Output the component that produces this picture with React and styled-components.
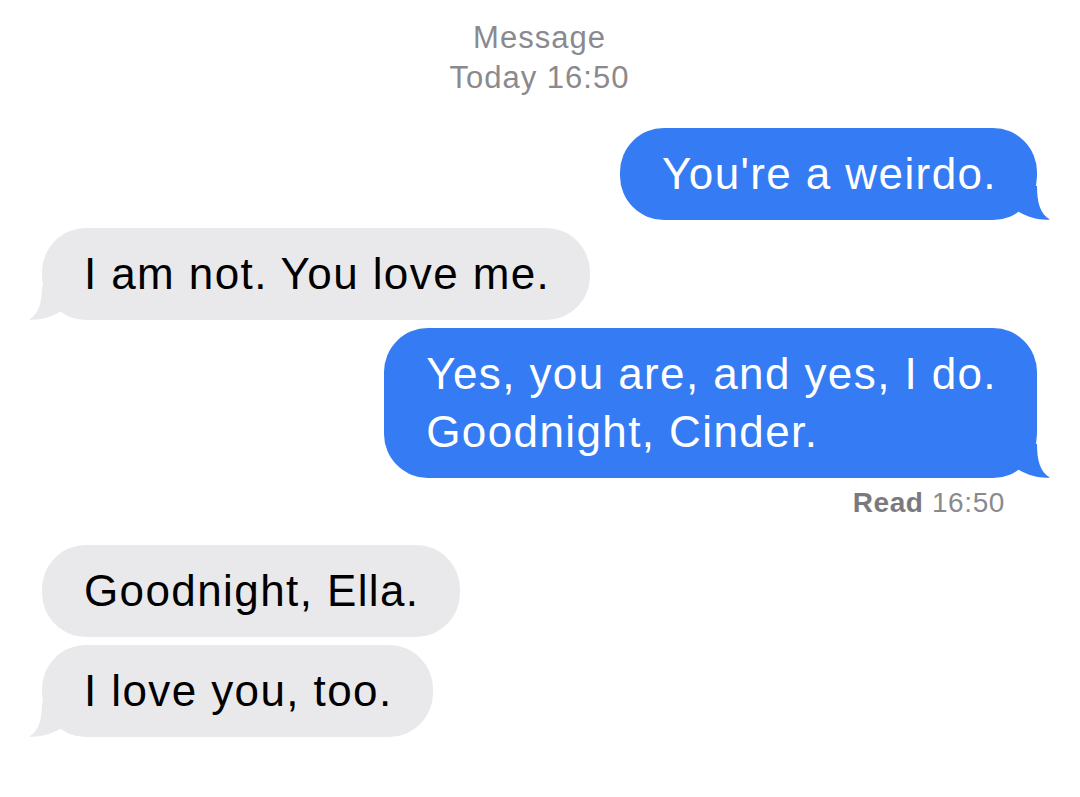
import React from "react";
import styled, { createGlobalStyle } from "styled-components";

const GlobalStyle = createGlobalStyle`
  html, body {
    margin: 0;
    padding: 0;
    background: #ffffff;
  }
  body {
    font-family: "Liberation Sans", Arial, sans-serif;
    -webkit-font-smoothing: antialiased;
  }
`;

const Thread = styled.div`
  display: flex;
  flex-direction: column;
  padding: 18px 43px 40px 42px;
  overflow: hidden;
`;

const Header = styled.div`
  display: flex;
  flex-direction: column;
  align-items: center;
  color: #8a8a8e;
  font-size: 31px;
  line-height: 40px;
  letter-spacing: 1px;
  margin-bottom: 22px;
`;

const Row = styled.div`
  display: flex;
  justify-content: ${(p) => (p.$mine ? "flex-end" : "flex-start")};
  margin-top: 8px;
`;

const Bubble = styled.div`
  position: relative;
  padding: 17px 40px 17px 42px;
  border-radius: 44px;
  font-size: 44px;
  line-height: 58px;
  letter-spacing: 1.4px;
  white-space: pre-line;
  background: ${(p) => (p.$mine ? "#357bf3" : "#e9e9eb")};
  color: ${(p) => (p.$mine ? "#ffffff" : "#000000")};
`;

const TailSvg = styled.svg`
  position: absolute;
  bottom: 0;
  width: 36px;
  height: 34px;
  ${(p) => (p.$mine ? "right: -13px;" : "left: -13px; transform: scaleX(-1);")}
`;

const Status = styled.div`
  align-self: flex-end;
  margin: 9px 32px 18px 0;
  font-size: 28px;
  line-height: 32px;
  letter-spacing: 0.6px;
  color: #8a8a8e;

  b {
    font-weight: 700;
    color: #7a7a7e;
  }
`;

const Tail = ({ mine }) => (
  <TailSvg $mine={mine} viewBox="0 0 36 34">
    <path
      d="M23 0 C23 16 26 28 36 33.5 C28 34.5 15 32 5 26 L0 22 L0 0 Z"
      fill={mine ? "#357bf3" : "#e9e9eb"}
    />
  </TailSvg>
);

const Message = ({ mine, tail, children }) => (
  <Row $mine={mine}>
    <Bubble $mine={mine}>
      {children}
      {tail && <Tail mine={mine} />}
    </Bubble>
  </Row>
);

export default function App() {
  return (
    <>
      <GlobalStyle />
      <Thread>
        <Header>
          <span>Message</span>
          <span>Today 16:50</span>
        </Header>
        <Message mine tail>
          You're a weirdo.
        </Message>
        <Message tail>I am not. You love me.</Message>
        <Message mine tail>
          {"Yes, you are, and yes, I do.\nGoodnight, Cinder."}
        </Message>
        <Status>
          <b>Read</b> 16:50
        </Status>
        <Message>Goodnight, Ella.</Message>
        <Message tail>I love you, too.</Message>
      </Thread>
    </>
  );
}
